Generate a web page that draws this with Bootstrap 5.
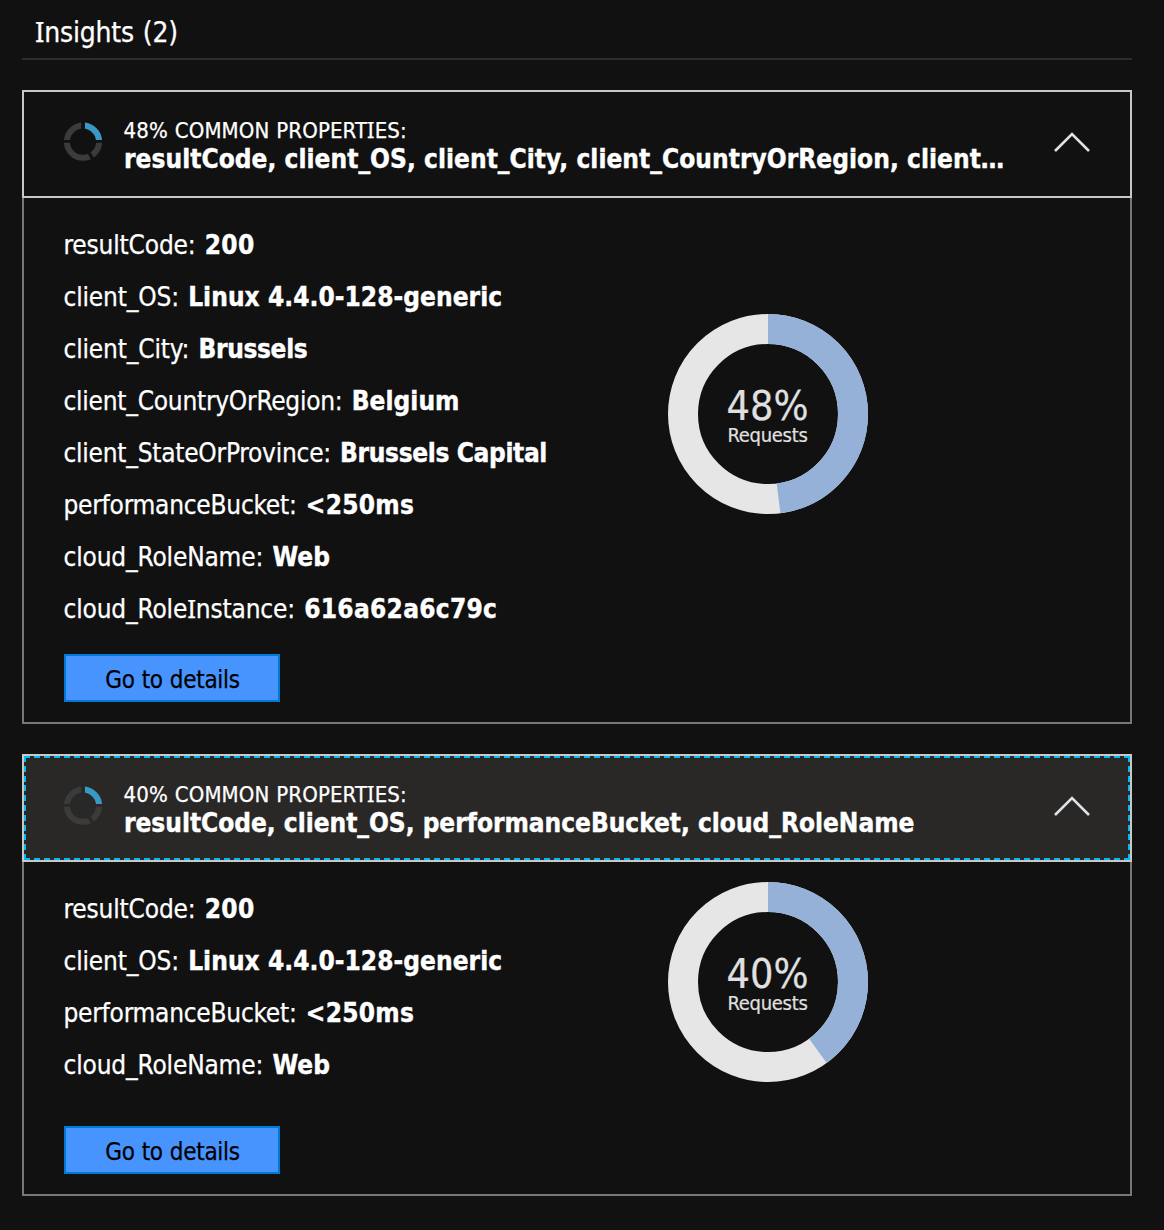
<!DOCTYPE html>
<html lang="en">
<head>
<meta charset="utf-8">
<meta name="viewport" content="width=device-width, initial-scale=1">
<title>Insights</title>
<link href="https://cdn.jsdelivr.net/npm/bootstrap@5.3.0/dist/css/bootstrap.min.css" rel="stylesheet">
<style>
  body { background: #111; color: #fff; font-family: "DejaVu Sans Condensed", "DejaVu Sans", sans-serif; font-size: 26px; -webkit-text-stroke: .25px; }
  b { -webkit-text-stroke: .4px; }
  .pane { width: 1110px; margin-left: 22px; }
  .pane-title { height: 60px; border-bottom: 2px solid #2d2d2d; padding: 14px 0 0 13px; margin-bottom: 30px; font-size: 28px; font-weight: 400; line-height: 37px; letter-spacing: -.2px; word-spacing: 1px; }
  .serif-i { font-family: "Noto Sans", sans-serif; line-height: 1; }
  .insight { --bs-card-bg: transparent; --bs-card-color: #fff; --bs-card-border-width: 0; --bs-card-border-radius: 0; margin-bottom: 30px; }
  .insight-head { --face: #111; height: 108px; border: 2px solid #c8c8c8; background: var(--face); padding: 24px 40px 0 40px; color: #fff; }
  .insight-head.focused {
    --face: #292827;
    --dash-x: repeating-linear-gradient(90deg, #00bcf2 0 6px, transparent 6px 10px);
    --dash-y: repeating-linear-gradient(180deg, #00bcf2 0 6px, transparent 6px 9.8px);
    background: var(--dash-x) 0 0 / 100% 2px no-repeat, var(--dash-x) 0 100% / 100% 2px no-repeat,
      var(--dash-y) 0 0 / 2px 100% no-repeat, var(--dash-y) 100% 0 / 2px 100% no-repeat, var(--face);
  }
  .ring-icon { width: 38px; height: 39px; margin-top: 6px; margin-right: 21px; }
  .caption-line { font-size: 22px; line-height: 28px; letter-spacing: .12px; padding-top: 1px; margin-bottom: -1px; padding-left: .5px; word-spacing: .5px; }
  .names-line { font-size: 26px; line-height: 30px; font-weight: 700; letter-spacing: .04px; padding-left: 1px; -webkit-text-stroke: .4px; }
  .names-line.plain { letter-spacing: -.02px; }
  .chevron { width: 38px; height: 22px; margin-top: 15px; margin-right: -1px; }
  .insight-body { border: 2px solid #777; border-top: 0; padding: 20px 40px; }
  .props { width: 604.5px; margin-left: -.5px; line-height: 52px; letter-spacing: -.17px; word-spacing: 2px; padding-top: 1px; margin-bottom: -1px !important; }
  .props b { letter-spacing: .05px; word-spacing: 0; }
  .props .num { letter-spacing: .3px; }
  .props .place { letter-spacing: -.35px; }
  .props .snug { letter-spacing: -.25px; }
  .donut { width: 200px; height: 200px; margin-bottom: 24px; }
  .donut text { fill: #e0e0e0; stroke: #e0e0e0; stroke-width: .2px; text-anchor: middle; -webkit-text-stroke: 0; }
  .btn-details { --bs-btn-bg: #4894fe; --bs-btn-color: #000; --bs-btn-border-color: #0078d4; --bs-btn-border-width: 2px; --bs-btn-border-radius: 0; --bs-btn-padding-y: 0; --bs-btn-padding-x: 0; width: 216px; height: 48px; margin-top: 20px; padding-top: 1px; padding-left: 1px; font-size: 24px; line-height: 46px; letter-spacing: -.3px; word-spacing: .5px; }
</style>
</head>
<body>
<svg class="d-none">
  <symbol id="ring" viewBox="64 122 38 39">
    <circle cx="83" cy="141.7" r="16.1" fill="none" stroke="#3b3b3b" stroke-width="6"/>
    <path d="M83 125.6A16.1 16.1 0 0 1 99.1 141.7" fill="none" stroke="#3999c6" stroke-width="6"/>
    <path d="M60 141.4H106" stroke="var(--face)" stroke-width="2.8"/>
    <path d="M83.1 118V141" stroke="var(--face)" stroke-width="3.7"/>
    <path d="M83 141.7L94 161.5" stroke="var(--face)" stroke-width="3.2"/>
  </symbol>
  <symbol id="chev" viewBox="0 0 38 22">
    <path d="M2 20L19 3L36 20" fill="none" stroke="#dfe1e2" stroke-width="2.6"/>
  </symbol>
</svg>
<main class="pane">
  <h1 class="pane-title"><span class="serif-i">I</span>nsights (2)</h1>

  <section class="card insight">
    <div class="insight-head d-flex align-items-start">
      <svg class="ring-icon flex-shrink-0"><use href="#ring"/></svg>
      <div>
        <div class="caption-line">48% COMMON PROPERT<span class="serif-i">I</span>ES:</div>
        <div class="names-line text-nowrap">resultCode, client_OS, client_City, client_CountryOrRegion, client…</div>
      </div>
      <svg class="chevron flex-shrink-0 ms-auto"><use href="#chev"/></svg>
    </div>
    <div class="insight-body">
      <div class="d-flex align-items-center">
        <ul class="props list-unstyled">
          <li>resultCode: <b class="num">200</b></li>
          <li>client_OS: <b>Linux 4.4.0-128-generic</b></li>
          <li>client_City: <b class="place">Brussels</b></li>
          <li class="snug">client_CountryOrRegion: <b>Belgium</b></li>
          <li class="snug">client_StateOrProvince: <b class="place">Brussels Capital</b></li>
          <li class="snug">performanceBucket: <b class="num">&lt;250ms</b></li>
          <li>cloud_RoleName: <b>Web</b></li>
          <li>cloud_Role<span class="serif-i">I</span>nstance: <b class="num">616a62a6c79c</b></li>
        </ul>
        <svg class="donut" viewBox="0 0 200 200">
          <circle cx="100" cy="100" r="85" fill="none" stroke="#e6e6e6" stroke-width="30"/>
          <circle cx="100" cy="100" r="85" fill="none" stroke="#95b1d7" stroke-width="30" pathLength="100" stroke-dasharray="48 52" transform="rotate(-90 100 100)"/>
          <text x="99.5" y="106" font-size="41">48%</text>
          <text x="99.5" y="128" font-size="20" letter-spacing="-.3">Requests</text>
        </svg>
      </div>
      <button class="btn btn-details d-block">Go to details</button>
    </div>
  </section>

  <section class="card insight mb-0">
    <div class="insight-head focused d-flex align-items-start">
      <svg class="ring-icon flex-shrink-0"><use href="#ring"/></svg>
      <div>
        <div class="caption-line">40% COMMON PROPERT<span class="serif-i">I</span>ES:</div>
        <div class="names-line plain text-nowrap">resultCode, client_OS, performanceBucket, cloud_RoleName</div>
      </div>
      <svg class="chevron flex-shrink-0 ms-auto"><use href="#chev"/></svg>
    </div>
    <div class="insight-body">
      <div class="d-flex align-items-start">
        <ul class="props list-unstyled">
          <li>resultCode: <b class="num">200</b></li>
          <li>client_OS: <b>Linux 4.4.0-128-generic</b></li>
          <li class="snug">performanceBucket: <b class="num">&lt;250ms</b></li>
          <li>cloud_RoleName: <b>Web</b></li>
        </ul>
        <svg class="donut" viewBox="0 0 200 200">
          <circle cx="100" cy="100" r="85" fill="none" stroke="#e6e6e6" stroke-width="30"/>
          <circle cx="100" cy="100" r="85" fill="none" stroke="#95b1d7" stroke-width="30" pathLength="100" stroke-dasharray="40 60" transform="rotate(-90 100 100)"/>
          <text x="99.5" y="106" font-size="41">40%</text>
          <text x="99.5" y="128" font-size="20" letter-spacing="-.3">Requests</text>
        </svg>
      </div>
      <button class="btn btn-details d-block">Go to details</button>
    </div>
  </section>
</main>
<script src="https://cdn.jsdelivr.net/npm/bootstrap@5.3.0/dist/js/bootstrap.bundle.min.js"></script>
</body>
</html>
